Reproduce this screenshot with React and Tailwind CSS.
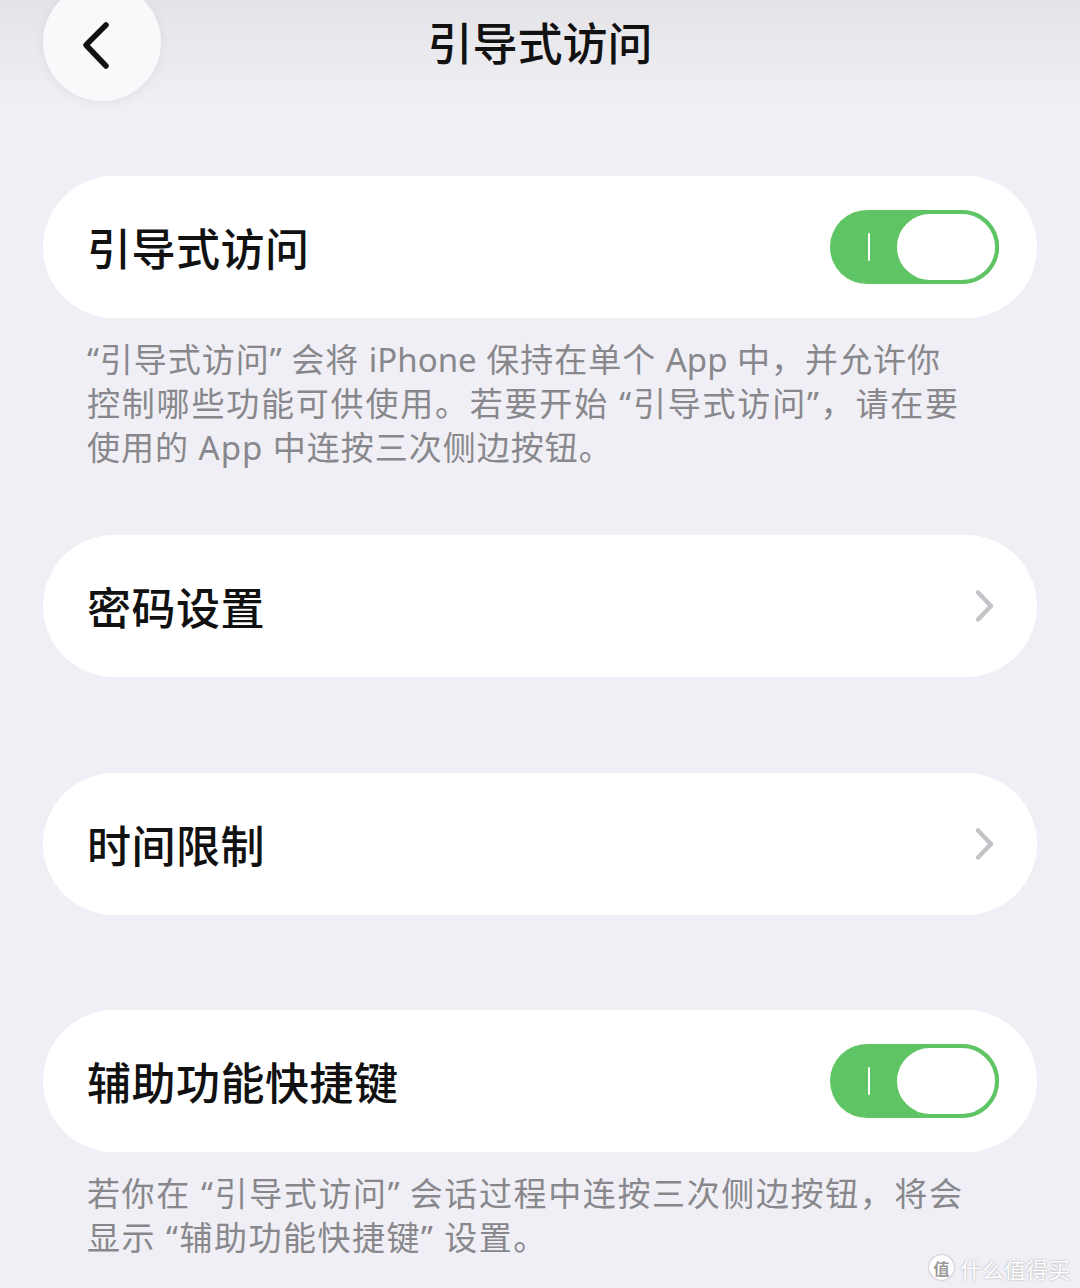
import React from "react";

const font = { fontFamily: '"Noto Sans CJK SC", "Noto Sans", sans-serif' };
const footFont = { fontFamily: '"Noto Sans", "Noto Sans CJK SC", sans-serif' };

function Toggle() {
  return (
    <div className="relative w-[169px] h-[74px] rounded-full bg-[#5fc464] flex items-center">
      <div className="ml-[38px] w-[2px] h-[28px] bg-white rounded-full" />
      <div className="absolute right-0 top-0 w-[106px] h-[74px] rounded-full bg-white border-[4px] border-[#5fc464]" />
    </div>
  );
}

function Chevron() {
  return (
    <svg width="22" height="36" viewBox="0 0 22 36" className="mr-[3px]">
      <path d="M4 4.5 L17 18 L4 31.5" fill="none" stroke="#c4c4c8" strokeWidth="4.5" strokeLinecap="round" strokeLinejoin="round" />
    </svg>
  );
}

function Card({ label, right }) {
  return (
    <div className="mx-[43px] h-[142px] rounded-[71px] bg-white flex items-center justify-between pl-[44px] pr-[38px]">
      <span className="text-[44px] leading-none text-[#111] font-medium tracking-[0.5px]">{label}</span>
      {right}
    </div>
  );
}

export default function App() {
  return (
    <div style={font} className="w-[1080px] h-[1288px] bg-[#f0eff5] overflow-hidden relative">
      <div className="h-[176px] bg-gradient-to-b from-[#e4e4e8] to-[#f0eff5] to-[60%] flex items-start">
        <div className="-mt-[17px] ml-[43px] w-[118px] h-[118px] rounded-full bg-[#f9f9fb] shadow-[0_2px_12px_rgba(0,0,0,0.06)] flex items-center justify-center">
          <svg width="40" height="60" viewBox="0 0 40 60" className="mt-[16px] -ml-[8px]">
            <path d="M28 5 L8 25 L28 46" fill="none" stroke="#111" strokeWidth="5.5" strokeLinecap="round" strokeLinejoin="round" />
          </svg>
        </div>
        <div className="flex-1 flex justify-center -ml-[161px] pt-[15px]">
          <span className="text-[45px] leading-[54px] font-medium text-[#111]">引导式访问</span>
        </div>
      </div>

      <Card label="引导式访问" right={<Toggle />} />
      <div style={footFont} className="mt-[20px] ml-[87px] text-[33px] leading-[44px] text-[#88888c] whitespace-nowrap">
        <div className="w-[853px] text-justify [text-align-last:justify]">“引导式访问” 会将 iPhone 保持在单个 App 中，并允许你</div>
        <div className="w-[871px] text-justify [text-align-last:justify]">控制哪些功能可供使用。若要开始 “引导式访问”，请在要</div>
        <div className="tracking-[1px]">使用的 App 中连按三次侧边按钮。</div>
      </div>

      <div className="h-[65px]" />
      <Card label="密码设置" right={<Chevron />} />
      <div className="h-[96px]" />
      <Card label="时间限制" right={<Chevron />} />
      <div className="h-[95px]" />
      <Card label="辅助功能快捷键" right={<Toggle />} />
      <div style={footFont} className="mt-[20px] ml-[87px] text-[33px] leading-[44px] text-[#88888c] whitespace-nowrap">
        <div className="w-[875px] text-justify [text-align-last:justify]">若你在 “引导式访问” 会话过程中连按三次侧边按钮，将会</div>
        <div className="tracking-[1.5px]">显示 “辅助功能快捷键” 设置。</div>
      </div>

      <div className="absolute right-[10px] bottom-[8px] flex items-center gap-[6px] text-white [text-shadow:0_0_2px_rgba(0,0,0,0.35)]">
        <div className="w-[25px] h-[25px] rounded-full bg-white shadow-[0_0_2px_rgba(0,0,0,0.4)] flex items-center justify-center text-[16px] text-[#999] [text-shadow:none] font-bold">值</div>
        <span className="text-[22px] leading-none">什么值得买</span>
      </div>
    </div>
  );
}
